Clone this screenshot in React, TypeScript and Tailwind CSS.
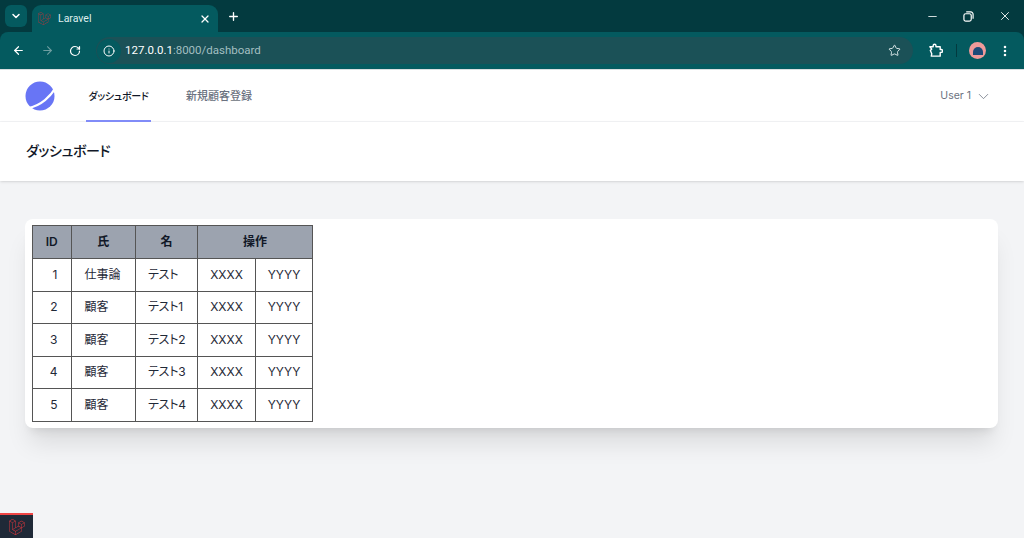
import { ArrowLeft, ArrowRight, ChevronDown, Info, Minus, Plus, RotateCw, Star, X, EllipsisVertical } from "lucide-react";
import { SiLaravel } from "react-icons/si";

const rows = [
  { id: 1, last: "仕事論", first: "テスト" },
  { id: 2, last: "顧客", first: "テスト1" },
  { id: 3, last: "顧客", first: "テスト2" },
  { id: 4, last: "顧客", first: "テスト3" },
  { id: 5, last: "顧客", first: "テスト4" },
];

const Logo = () => (
  <svg viewBox="0 0 30 30" className="w-[30px] h-[30px]">
    <circle cx="15" cy="15" r="14.5" fill="#6875f5" />
    <path d="M31 6C26 15 16 25 3 27" fill="none" stroke="#ffffff" strokeWidth="2.2" />
  </svg>
);

const Extensions = () => (
  <svg viewBox="0 0 16 16" className="w-[15px] h-[15px] ml-[15px]" fill="none" stroke="currentColor" strokeWidth="1.5" strokeLinejoin="round">
    <path d="M2 4h3.500V2.800a1.500 1.500 0 0 1 3 0V4H13v3h1a1.500 1.500 0 0 1 0 3h-1v4H3.500L4 11.500 2.500 8 4 6.500 2 4Z" />
  </svg>
);

const Browser = () => (
  <div className="h-[70px] bg-[#033a3f] flex flex-col font-['Roboto',sans-serif]">
    <div className="h-[32px] flex items-end pl-[5px]">
      <div className="w-[22px] h-[22px] mb-[5px] rounded-[6px] bg-[#045a5f] flex items-center justify-center text-white">
        <ChevronDown size={12} strokeWidth={3} />
      </div>
      <div className="w-[186px] h-[27px] ml-[5px] rounded-t-[9px] bg-[#045a5f] flex items-center pl-[6px] pr-[7px] text-white">
        <SiLaravel size={13} className="text-[#a83a3f]" />
        <span className="ml-[7px] text-[10.500px] text-[#dfeeee]">Laravel</span>
        <X size={12} strokeWidth={2.5} className="ml-auto" />
      </div>
      <Plus size={13} strokeWidth={2.5} className="ml-[9px] mb-[9px] text-white" />
      <div className="ml-auto h-[32px] flex items-center pr-[12px] text-white">
        <Minus size={13} strokeWidth={1.5} />
        <svg viewBox="0 0 12 12" className="w-[11px] h-[11px] ml-[24px]" fill="none" stroke="currentColor" strokeWidth="1.3">
          <rect x="1" y="3" width="8" height="8" rx="2" />
          <path d="M3.500 1h5A2.500 2.500 0 0 1 11 3.500v5" />
        </svg>
        <X size={14} strokeWidth={1.5} className="ml-[24px]" />
      </div>
    </div>
    <div className="h-[37px] bg-[#045a5f] rounded-t-[8px] flex items-start pl-[12px] pr-[11px] text-white pt-[5px]">
      <div className="h-[27px] flex items-center">
        <ArrowLeft size={13} strokeWidth={2.2} />
        <ArrowRight size={13} strokeWidth={2} className="ml-[16px] text-[#6f9ea1]" />
        <RotateCw size={12} strokeWidth={2.4} className="ml-[15px]" />
        <div className="ml-[15px] h-[27px] w-[817px] shrink-0 rounded-full bg-[#1b5157] flex items-center pr-[12px]">
          <div className="w-[24px] h-[24px] ml-[1px] rounded-full bg-[#045a5f] flex items-center justify-center">
            <Info size={12} strokeWidth={2} />
          </div>
          <span className="ml-[4px] text-[11.500px] text-white">
            127.0.0.1<span className="text-[#a3bfc1]">:8000/dashboard</span>
          </span>
          <Star size={13} strokeWidth={1.8} className="ml-auto text-[#dbe7e8]" />
        </div>
        <Extensions />
        <div className="ml-[13px] w-px h-[13px] bg-[#033a3f]" />
        <div className="ml-[12px] w-[17px] h-[17px] rounded-full bg-[#f09a9a] flex items-center justify-center">
          <div className="w-[10px] h-[8px] rounded-t-full bg-[#1d4a78]" />
        </div>
        <EllipsisVertical size={14} strokeWidth={2.4} className="ml-[12px]" />
      </div>
    </div>
    <div className="h-px bg-[#d9dee0]" />
  </div>
);

const Nav = () => (
  <nav className="h-[52px] bg-white border-b border-[#f3f4f6] flex items-stretch pl-[25px] pr-[32px] [font-feature-settings:'palt']">
    <div className="flex items-center">
      <Logo />
    </div>
    <a className="ml-[31px] w-[65px] pt-[2px] whitespace-nowrap flex items-center justify-center border-b-2 border-[#818cf8] text-[10px] tracking-[-0.3px] font-medium text-[#111827] -mb-px">
      ダッシュボード
    </a>
    <a className="ml-[35px] pt-[2px] flex items-center text-[11px] font-medium text-[#6b7280]">新規顧客登録</a>
    <div className="ml-auto pt-[1px] flex items-center text-[10.500px] text-[#6b7280]">
      User 1
      <ChevronDown size={17} strokeWidth={1.1} className="ml-[4px]" />
    </div>
  </nav>
);

export default function App() {
  const cell = "border border-[#555555]";
  return (
    <div className="w-[1024px] h-[538px] overflow-hidden relative bg-[#f3f4f6] font-['Inter','Noto_Sans_CJK_JP',sans-serif]">
      <Browser />
      <Nav />
      <header className="h-[59px] bg-white shadow-sm flex items-center pl-[26px] pb-[2px]">
        <h2 className="text-[14px] tracking-[-0.4px] font-medium text-[#111827] [font-feature-settings:'palt']">ダッシュボード</h2>
      </header>
      <main className="pt-[38px] pl-[25px] pr-[26px]">
        <div className="h-[209px] bg-white rounded-lg shadow-xl pt-[6px] pl-[7px]">
          <table className="border-collapse table-fixed w-[280px] text-[12px] text-[#1f2937] [font-feature-settings:'palt']">
            <colgroup>
              <col className="w-[38.500px]" />
              <col className="w-[64.500px]" />
              <col className="w-[62px]" />
              <col className="w-[58px]" />
              <col className="w-[57px]" />
            </colgroup>
            <thead>
              <tr className="h-[33px] bg-[#9ca3af] text-[#111827]">
                <th className={`${cell} font-semibold`}>ID</th>
                <th className={`${cell} font-semibold`}>氏</th>
                <th className={`${cell} font-semibold`}>名</th>
                <th colSpan={2} className={`${cell} font-semibold`}>操作</th>
              </tr>
            </thead>
            <tbody>
              {rows.map((row) => (
                <tr key={row.id} className="h-[32.500px]">
                  <td className={`${cell} text-right pr-[13px]`}>{row.id}</td>
                  <td className={`${cell} pl-[13px]`}>{row.last}</td>
                  <td className={`${cell} pl-[12px] tracking-[-0.2px]`}>{row.first}</td>
                  <td className={`${cell} text-center`}>XXXX</td>
                  <td className={`${cell} text-center`}>YYYY</td>
                </tr>
              ))}
            </tbody>
          </table>
        </div>
      </main>
      <div className="absolute left-0 bottom-0 w-[33px] h-[25px] bg-[#1f2937] border-t-2 border-[#ef4444] flex items-center justify-center text-[#d6363c]">
        <SiLaravel size={16} />
      </div>
    </div>
  );
}
